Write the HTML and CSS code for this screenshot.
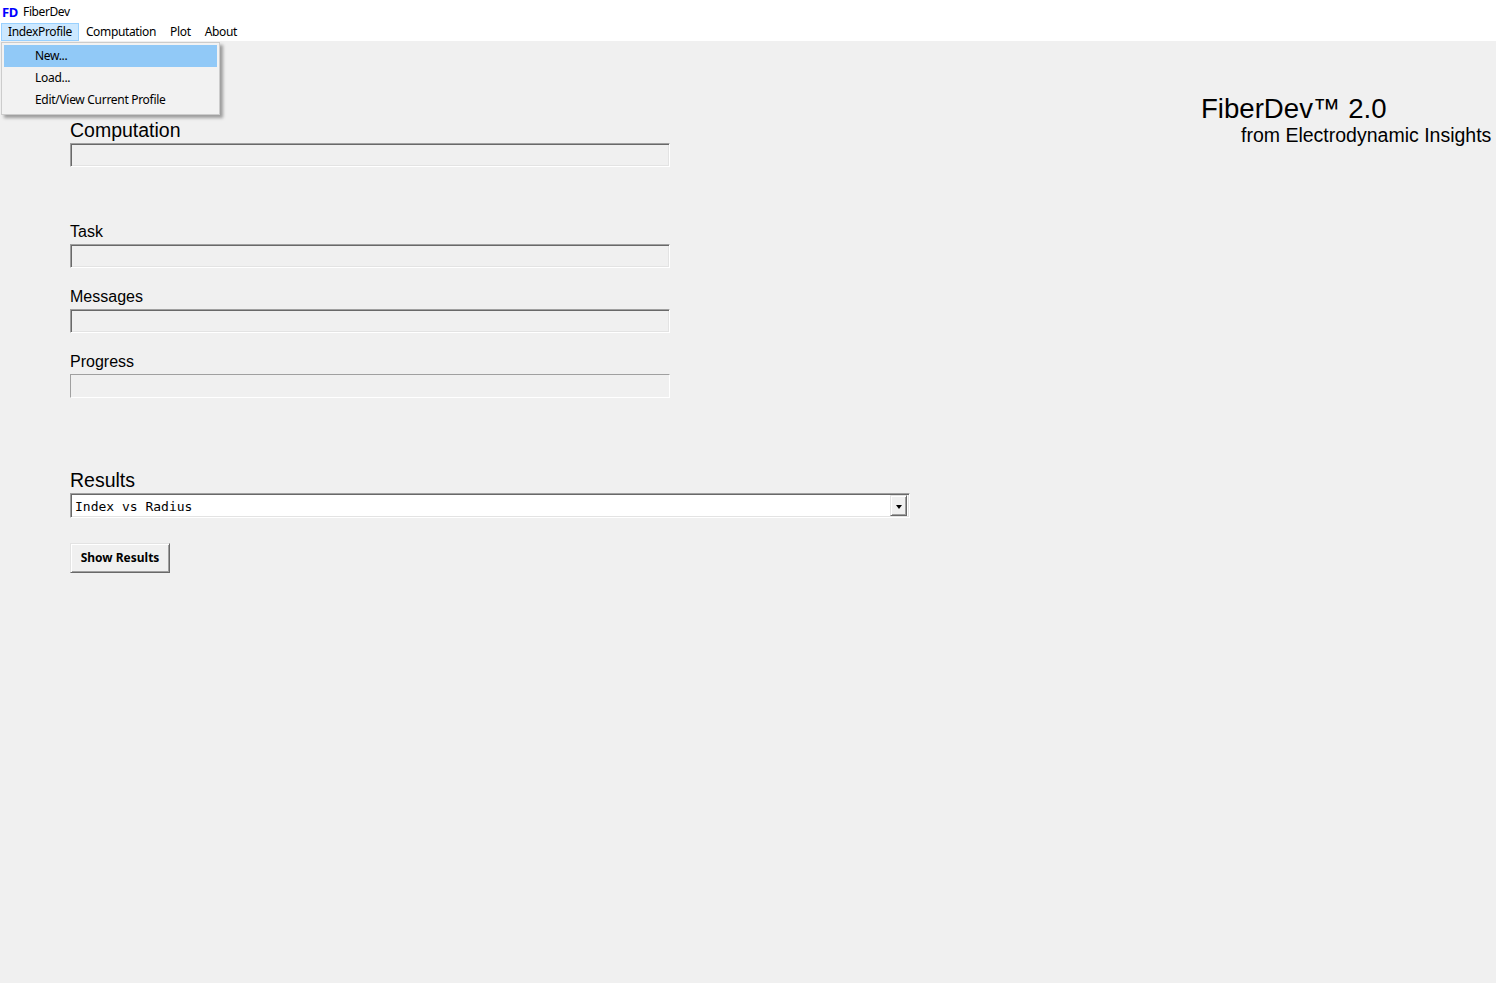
FILE: index.html
```html
<!DOCTYPE html>
<html>
<head>
<meta charset="utf-8">
<title>FiberDev</title>
<link rel="stylesheet" href="styles.css">
</head>
<body>
<header class="chrome">
  <div class="titlebar"><span class="fd">FD</span><span class="apptitle">FiberDev</span></div>
  <nav class="menubar">
    <span class="menuitem active">IndexProfile</span>
    <span class="menuitem">Computation</span>
    <span class="menuitem">Plot</span>
    <span class="menuitem">About</span>
    <div class="dropdown">
      <div class="dditem hover">New...</div>
      <div class="dditem">Load...</div>
      <div class="dditem">Edit/View Current Profile</div>
    </div>
  </nav>
</header>
<main class="content">
  <section class="panel">
    <div class="biglabel">Computation</div>
    <div class="field sunken"></div>

    <div class="smalllabel first">Task</div>
    <div class="field sunken"></div>

    <div class="smalllabel">Messages</div>
    <div class="field sunken"></div>

    <div class="smalllabel">Progress</div>
    <div class="field flat"></div>

    <div class="biglabel results">Results</div>
    <div class="combo">
      <span class="combotext">Index vs Radius</span>
      <span class="combobtn"><span class="tri"></span></span>
    </div>

    <button class="showbtn">Show Results</button>
  </section>
  <aside class="brand">
    <div class="brandtitle">FiberDev™ 2.0</div>
    <div class="brandsub">from Electrodynamic Insights</div>
  </aside>
</main>
</body>
</html>
```
FILE: styles.css
```css
html, body {
  margin: 0;
  padding: 0;
}
body {
  background: #f0f0f0;
  width: 1496px;
  height: 983px;
  overflow: hidden;
  font-family: "Liberation Sans", Arial, sans-serif;
  color: #000;
}
.chrome {
  background: #ffffff;
  height: 41px;
  position: relative;
}
.titlebar {
  height: 23px;
  display: flex;
  align-items: center;
  padding-left: 2px;
}
.fd {
  font-family: "Noto Sans", sans-serif;
  font-weight: bold;
  color: #0000ff;
  font-size: 13px;
  margin-right: 5px;
  letter-spacing: -0.3px;
}
.apptitle {
  font-family: "Noto Sans", sans-serif;
  font-size: 12px;
  letter-spacing: -0.4px;
}
.menubar {
  height: 18px;
  display: flex;
  align-items: stretch;
  padding-left: 1px;
  font-family: "Noto Sans", sans-serif;
  font-size: 12px;
  letter-spacing: -0.35px;
  position: relative;
}
.menuitem {
  padding: 0 6px;
  border: 1px solid transparent;
  display: flex;
  align-items: center;
  line-height: 16px;
}
.menuitem.active {
  background: #cce8ff;
  border-color: #99d1ff;
}
.dropdown {
  position: absolute;
  left: 1px;
  top: 19px;
  width: 213px;
  padding: 2px 2px 3px 2px;
  background: #f2f2f2;
  border: 1px solid #cccccc;
  box-shadow: 3px 3px 3px rgba(0,0,0,0.35);
  z-index: 10;
  letter-spacing: -0.3px;
}
.dditem {
  height: 22px;
  line-height: 22px;
  padding-left: 31px;
  font-size: 12px;
}
.dditem.hover {
  background: #91c9f7;
}
.content {
  display: flex;
  justify-content: space-between;
  align-items: flex-start;
}
.panel {
  padding-left: 70px;
  padding-top: 78px;
  display: flex;
  flex-direction: column;
  align-items: flex-start;
}
.biglabel {
  font-size: 19.5px;
  line-height: 22px;
  margin-bottom: 2px;
}
.biglabel.results {
  margin-top: 71px;
}
.smalllabel {
  font-size: 16px;
  line-height: 18px;
  margin-top: 20px;
  margin-bottom: 3px;
}
.smalllabel.first {
  margin-top: 56px;
}
.field {
  width: 600px;
  height: 24px;
  box-sizing: border-box;
  background: #f0f0f0;
}
.field.sunken {
  border-top: 1px solid #a0a0a0;
  border-left: 1px solid #a0a0a0;
  border-bottom: 1px solid #ffffff;
  border-right: 1px solid #ffffff;
  box-shadow: inset 1px 1px 0 #696969, inset -1px -1px 0 #e3e3e3;
}
.field.flat {
  border-top: 1px solid #a0a0a0;
  border-left: 1px solid #a0a0a0;
  border-bottom: 1px solid #ffffff;
  border-right: 1px solid #ffffff;
}
.combo {
  width: 840px;
  height: 25px;
  box-sizing: border-box;
  background: #ffffff;
  border-top: 1px solid #a0a0a0;
  border-left: 1px solid #a0a0a0;
  border-bottom: 1px solid #ffffff;
  border-right: 1px solid #ffffff;
  box-shadow: inset 1px 1px 0 #696969, inset -1px -1px 0 #e3e3e3;
  display: flex;
  align-items: center;
  justify-content: space-between;
  padding: 2px 2px 2px 4px;
}
.combotext {
  font-family: "DejaVu Sans Mono", monospace;
  font-size: 13px;
  padding-top: 1px;
}
.combobtn {
  width: 17px;
  height: 21px;
  box-sizing: border-box;
  background: #f0f0f0;
  border-top: 1px solid #e3e3e3;
  border-left: 1px solid #e3e3e3;
  border-bottom: 1px solid #696969;
  border-right: 1px solid #696969;
  box-shadow: inset 1px 1px 0 #ffffff, inset -1px -1px 0 #a0a0a0;
  display: flex;
  align-items: center;
  justify-content: center;
}
.tri {
  width: 0;
  height: 0;
  border-left: 3.5px solid transparent;
  border-right: 3.5px solid transparent;
  border-top: 4px solid #000;
  margin-top: 2px;
}
.showbtn {
  margin-top: 25px;
  width: 100px;
  height: 30px;
  box-sizing: border-box;
  background: #f0f0f0;
  font-family: "Noto Sans", sans-serif;
  font-weight: bold;
  font-size: 12px;
  color: #000;
  padding: 0 0 1px 0;
  border-top: 1px solid #e3e3e3;
  border-left: 1px solid #e3e3e3;
  border-bottom: 1px solid #696969;
  border-right: 1px solid #696969;
  box-shadow: inset 1px 1px 0 #ffffff, inset -1px -1px 0 #a0a0a0;
}
.brand {
  margin-top: 53px;
  padding-right: 4px;
  width: 291px;
}
.brandtitle {
  font-size: 27.6px;
  line-height: 30px;
  white-space: nowrap;
}
.brandsub {
  font-size: 19.5px;
  line-height: 22px;
  padding-left: 40px;
  white-space: nowrap;
}
```
